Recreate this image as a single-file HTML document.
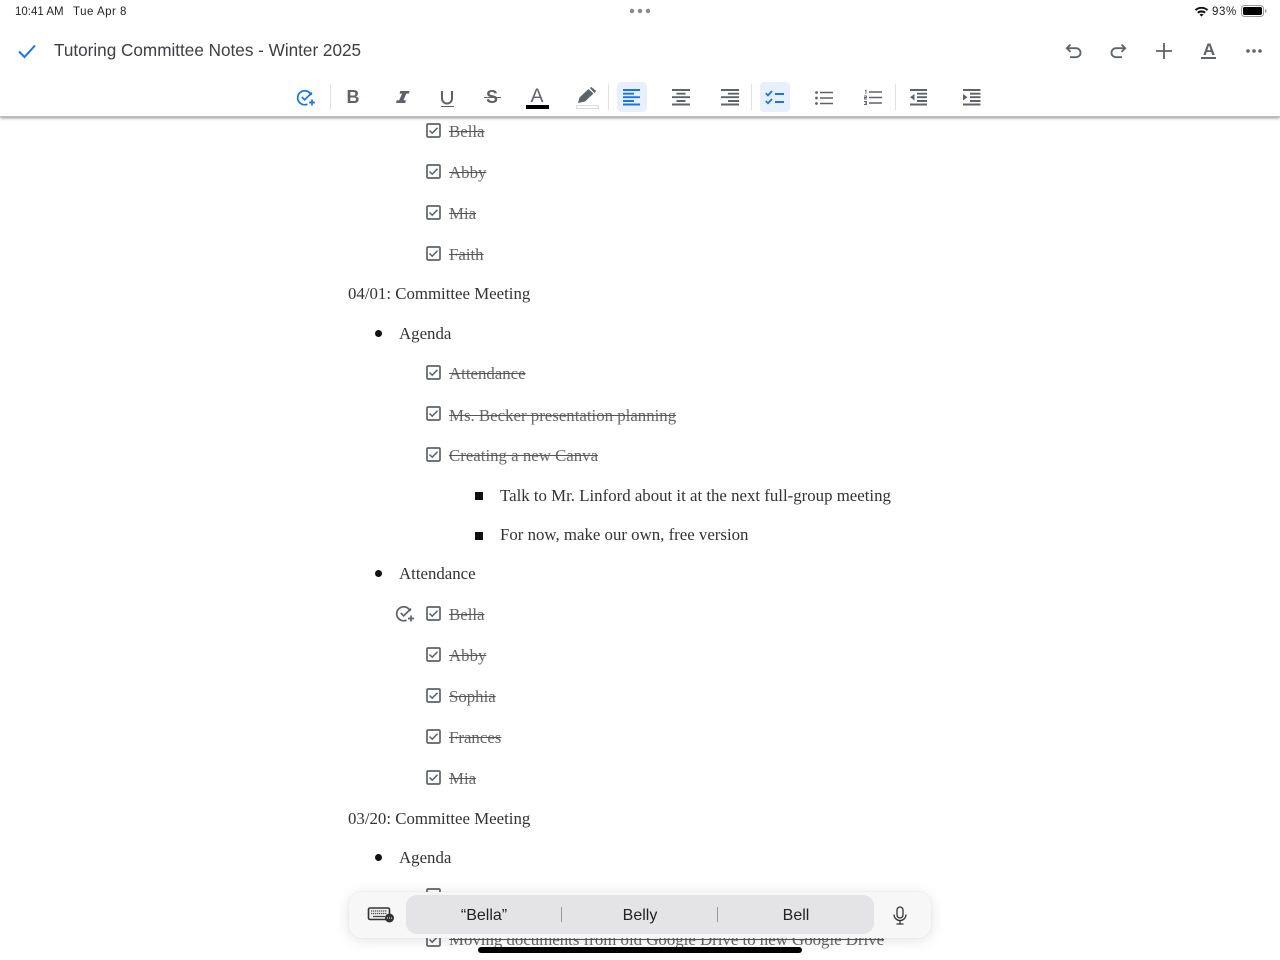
<!DOCTYPE html>
<html><head><meta charset="utf-8"><style>
html,body{margin:0;padding:0;background:#fff}
#p{position:relative;width:1280px;height:960px;overflow:hidden;background:#fff}
.a{position:absolute;white-space:nowrap}
.t{position:absolute;white-space:nowrap;font:16.84px/20px "Liberation Serif",serif;color:#333}
.s{color:#666;text-decoration:line-through;text-decoration-color:#555}
.b{position:absolute;left:375px;width:7px;height:7px;border-radius:50%;background:#111}
.q{position:absolute;left:475px;width:8px;height:8px;background:#111}
.c{position:absolute;left:425.500px;width:15px;height:15px}
.ui{font-family:"Liberation Sans",sans-serif}
svg{position:absolute;overflow:visible}
</style></head><body><div id="p">

<!-- document -->
<div class="t s" style="left:449px;top:122px">Bella</div>
<div class="t s" style="left:449px;top:163px">Abby</div>
<div class="t s" style="left:449px;top:204px">Mia</div>
<div class="t s" style="left:449px;top:245px">Faith</div>
<div class="t" style="left:348px;top:284px">04/01: Committee Meeting</div>
<div class="t" style="left:399px;top:324px">Agenda</div>
<div class="t s" style="left:449px;top:364px">Attendance</div>
<div class="t s" style="left:449px;top:406px">Ms. Becker presentation planning</div>
<div class="t s" style="left:449px;top:446px">Creating a new Canva</div>
<div class="t" style="left:500px;top:486px">Talk to Mr. Linford about it at the next full-group meeting</div>
<div class="t" style="left:500px;top:525px">For now, make our own, free version</div>
<div class="t" style="left:399px;top:564px">Attendance</div>
<div class="t s" style="left:449px;top:605px">Bella</div>
<div class="t s" style="left:449px;top:646px">Abby</div>
<div class="t s" style="left:449px;top:687px">Sophia</div>
<div class="t s" style="left:449px;top:728px">Frances</div>
<div class="t s" style="left:449px;top:769px">Mia</div>
<div class="t" style="left:348px;top:809px">03/20: Committee Meeting</div>
<div class="t" style="left:399px;top:848px">Agenda</div>
<div class="t s" style="left:449px;top:930px">Moving documents from old Google Drive to new Google Drive</div>

<div class="b" style="top:330px"></div>
<div class="b" style="top:570px"></div>
<div class="b" style="top:854px"></div>
<div class="q" style="top:492px"></div>
<div class="q" style="top:532px"></div>

<svg width="0" height="0" style="left:0;top:0">
<defs>
<g id="cb"><rect x="1" y="1" width="13" height="13" rx="1.200" fill="none" stroke="#5f6368" stroke-width="1.700"/><path d="M3.500 7.500l2.700 2.700L11.500 4.800" fill="none" stroke="#5f6368" stroke-width="1.500"/></g>
<g id="cp"><path d="M14.200 6.200A7 7 0 1 0 10.500 15.200" fill="none" stroke="currentColor" stroke-width="1.700"/><path d="M4.800 8l2.800 2.800L15 3.600" fill="none" stroke="currentColor" stroke-width="1.700"/><path d="M15 10.500v6M12 13.500h6" fill="none" stroke="currentColor" stroke-width="1.700"/></g>
</defs>
</svg>
<svg class="c" style="top:123px"><use href="#cb"/></svg>
<svg class="c" style="top:164px"><use href="#cb"/></svg>
<svg class="c" style="top:205px"><use href="#cb"/></svg>
<svg class="c" style="top:246px"><use href="#cb"/></svg>
<svg class="c" style="top:365px"><use href="#cb"/></svg>
<svg class="c" style="top:406px"><use href="#cb"/></svg>
<svg class="c" style="top:447px"><use href="#cb"/></svg>
<svg class="c" style="top:606px"><use href="#cb"/></svg>
<svg class="c" style="top:647px"><use href="#cb"/></svg>
<svg class="c" style="top:688px"><use href="#cb"/></svg>
<svg class="c" style="top:729px"><use href="#cb"/></svg>
<svg class="c" style="top:770px"><use href="#cb"/></svg>
<svg class="c" style="top:888px"><use href="#cb"/></svg>
<svg class="c" style="top:932px"><use href="#cb"/></svg>
<svg width="19" height="18" style="left:396px;top:605px;color:#5f6368"><use href="#cp"/></svg>

<!-- header -->
<div class="a" style="left:0;top:0;width:1280px;height:116px;background:#fff;box-shadow:0 1px 3px rgba(0,0,0,.45);border-bottom:1px solid #bbb"></div>

<div class="a ui" style="left:15px;top:5px;font-size:11.500px;line-height:14px;color:#222">10:41 AM</div>
<div class="a ui" style="left:73px;top:5px;font-size:11.500px;line-height:14px;letter-spacing:.5px;color:#222">Tue Apr 8</div>
<svg width="22" height="6" style="left:629px;top:8px"><circle cx="3" cy="3" r="2.200" fill="#888"/><circle cx="11" cy="3" r="2.200" fill="#888"/><circle cx="19" cy="3" r="2.200" fill="#888"/></svg>

<svg width="16" height="12" style="left:1193.500px;top:5px"><path d="M0.800 4.400A10 10 0 0 1 14.200 4.400L12.900 5.900A8 8 0 0 0 2.100 5.900Z" fill="#111"/><path d="M3.200 7A6.500 6.500 0 0 1 11.800 7L10.400 8.500A4.500 4.500 0 0 0 4.600 8.500Z" fill="#111"/><path d="M5.500 9.500A3 3 0 0 1 9.500 9.500L7.500 11.600Z" fill="#111"/></svg>
<div class="a ui" style="left:1212px;top:5px;font-size:11.500px;line-height:14px;letter-spacing:.6px;color:#222">93%</div>
<svg width="26" height="12" style="left:1241px;top:5px"><rect x=".5" y=".5" width="22" height="11" rx="3" fill="none" stroke="#999"/><rect x="2" y="2" width="19" height="8" rx="1.700" fill="#000"/><path d="M24 4v4c1-.3 1.500-1 1.500-2s-.5-1.700-1.500-2z" fill="#999"/></svg>

<svg width="20" height="16" style="left:17px;top:43px"><path d="M2 8.500l5.500 5.500L18 2.500" fill="none" stroke="#1a73e8" stroke-width="2"/></svg>
<div class="a ui" style="left:54px;top:40px;font-size:17.150px;line-height:21px;color:#3c4043">Tutoring Committee Notes - Winter 2025</div>

<!-- top right icons -->
<svg width="18" height="16" style="left:1065px;top:43px"><path d="M5.500 1.500L1.800 5.200l3.700 3.700M2 5.200h9a4.500 4.500 0 0 1 0 9H5" fill="none" stroke="#5f6368" stroke-width="1.800"/></svg>
<svg width="18" height="16" style="left:1109px;top:43px"><path d="M12.500 1.500l3.700 3.700-3.700 3.700M16 5.200H7a4.500 4.500 0 0 0 0 9h6" fill="none" stroke="#5f6368" stroke-width="1.800"/></svg>
<svg width="16" height="16" style="left:1156px;top:43px"><path d="M8 0v16M0 8h16" stroke="#5f6368" stroke-width="1.800"/></svg>
<div class="a ui" style="left:1201px;top:40px;width:16px;text-align:center;font-size:17px;line-height:19px;font-weight:bold;color:#5f6368">A</div>
<div class="a" style="left:1201px;top:57px;width:15px;height:1.500px;background:#5f6368"></div>
<svg width="16" height="4" style="left:1246px;top:49px"><circle cx="2" cy="2" r="1.800" fill="#5f6368"/><circle cx="8" cy="2" r="1.800" fill="#5f6368"/><circle cx="14" cy="2" r="1.800" fill="#5f6368"/></svg>

<!-- toolbar -->
<svg width="19" height="18" style="left:297px;top:89px;color:#1a73e8"><use href="#cp"/></svg>
<div class="a" style="left:330px;top:84px;width:1px;height:26px;background:#e0e0e0"></div>
<div class="a ui" style="left:345px;top:87px;width:16px;text-align:center;font-size:18px;line-height:21px;font-weight:bold;color:#5f6368">B</div>
<svg width="14" height="14" style="left:396px;top:90px"><path d="M4.200 1h9.300l-.6 2.600H10.300L7.500 10.200h2.400L9.300 13H0l.7-2.800h2.500L6 3.600H3.600z" fill="#5f6368"/></svg>
<svg width="14" height="16" style="left:440px;top:90px"><path d="M2 1v7.500a5 5 0 0 0 10 0V1" fill="none" stroke="#5f6368" stroke-width="2"/></svg>
<div class="a" style="left:441px;top:105.500px;width:12.500px;height:1.500px;background:#5f6368"></div>
<div class="a ui" style="left:484px;top:87px;width:16px;text-align:center;font-size:18px;line-height:21px;font-weight:bold;color:#5f6368">S</div>
<div class="a" style="left:484px;top:96.500px;width:17px;height:1.500px;background:#5f6368"></div>
<div class="a ui" style="left:527px;top:85px;width:20px;text-align:center;font-size:19.500px;line-height:22px;color:#5f6368">A</div>
<div class="a" style="left:526px;top:105px;width:23px;height:4px;background:#000"></div>
<svg width="20" height="17" style="left:577px;top:87px"><path d="M1 16l1.500-5.500L11.500 2l5 4.500-8.500 8z M12.800 1l1.500-1 4.700 3.800-.8 1.700-.8.400z" fill="#5f6368"/></svg>
<div class="a" style="left:576px;top:105px;width:21px;height:2px;border:1px solid #ddd;background:#fff"></div>
<div class="a" style="left:608px;top:84px;width:1px;height:26px;background:#e0e0e0"></div>

<div class="a" style="left:617px;top:82px;width:30px;height:30px;border-radius:4px;background:#e8f0fe"></div>
<svg width="18" height="17" style="left:623px;top:89px"><path d="M0 1h17M0 4.700h11M0 8.200h17M0 12h11M0 15.500h17" stroke="#1a73e8" stroke-width="1.900"/></svg>
<svg width="18" height="17" style="left:672px;top:89px"><path d="M0 1h18M4.500 4.700h9M0 8.200h18M4.500 12h9M0 15.500h18" stroke="#5f6368" stroke-width="1.900"/></svg>
<svg width="18" height="17" style="left:721px;top:89px"><path d="M0 1h18M7 4.700h11M0 8.200h18M7 12h11M0 15.500h18" stroke="#5f6368" stroke-width="1.900"/></svg>
<div class="a" style="left:751px;top:84px;width:1px;height:26px;background:#e0e0e0"></div>
<div class="a" style="left:760px;top:82px;width:30px;height:30px;border-radius:4px;background:#e8f0fe"></div>
<svg width="20" height="16" style="left:765px;top:90px"><path d="M.8 3.200l2.200 2.200L7 1M.8 11l2.200 2.200L7 9" fill="none" stroke="#1a73e8" stroke-width="1.800"/><path d="M10 4h9M10 12h9" stroke="#1a73e8" stroke-width="2"/></svg>
<svg width="18" height="14" style="left:815px;top:91px"><circle cx="1.500" cy="1.500" r="1.400" fill="#5f6368"/><circle cx="1.500" cy="7" r="1.400" fill="#5f6368"/><circle cx="1.500" cy="12.500" r="1.400" fill="#5f6368"/><path d="M5 1.500h13M5 7h13M5 12.500h13" stroke="#5f6368" stroke-width="1.600"/></svg>
<svg width="18" height="15" style="left:864px;top:90px"><path d="M5 2h13M5 7.500h13M5 13h13" stroke="#5f6368" stroke-width="1.600"/><path d="M1 .7l1-.5v3.500M0 6h2.500v1.500h-2v1.500h2.500M0 11.500h2.500v3h-2.500M.8 13h1.700" fill="none" stroke="#5f6368" stroke-width=".9"/></svg>
<div class="a" style="left:895px;top:84px;width:1px;height:26px;background:#e0e0e0"></div>
<svg width="18" height="17" style="left:910px;top:89px"><path d="M0 1h17M7 4.700h10M7 8.200h10M7 12h10M0 15.500h17" stroke="#5f6368" stroke-width="1.900"/><path d="M4.500 5v6.500L0 8.200z" fill="#5f6368"/></svg>
<svg width="18" height="17" style="left:963px;top:89px"><path d="M0 1h17.500M7 4.700h10.500M7 8.200h10.500M7 12h10.500M0 15.500h17.500" stroke="#5f6368" stroke-width="1.900"/><path d="M0 5v6.500l4.500-3.300z" fill="#5f6368"/></svg>

<!-- suggestion bar -->
<div class="a" style="left:349px;top:892px;width:582px;height:46px;border-radius:12px;background:#f7f7f7;box-shadow:0 2px 14px rgba(0,0,0,.12),0 0 1px rgba(0,0,0,.12)"></div>
<div class="a" style="left:406px;top:895px;width:468px;height:39px;border-radius:11px;background:#e4e4e6"></div>
<div class="a ui" style="left:406px;top:907px;width:156px;text-align:center;font-size:16px;line-height:18px;color:#222">“Bella”</div>
<div class="a ui" style="left:562px;top:907px;width:156px;text-align:center;font-size:16px;line-height:18px;color:#222">Belly</div>
<div class="a ui" style="left:718px;top:907px;width:156px;text-align:center;font-size:16px;line-height:18px;color:#222">Bell</div>
<div class="a" style="left:561px;top:907px;width:1px;height:15px;background:#999"></div>
<div class="a" style="left:717px;top:907px;width:1px;height:15px;background:#999"></div>
<svg width="28" height="17" style="left:367px;top:907px"><rect x="1.500" y="1" width="21" height="11.500" rx="1.500" fill="#eee" stroke="#333" stroke-width="1.600"/><path d="M4 4h16M4 6.500h16" stroke="#555" stroke-width="1.200" stroke-dasharray="1.300 .7"/><path d="M6 9.500h12" stroke="#444" stroke-width="1.200"/><circle cx="22.500" cy="11" r="4.500" fill="#333"/><path d="M20 11h5" stroke="#fff" stroke-width="1" stroke-dasharray="1 1"/></svg>
<svg width="14" height="19" style="left:893px;top:906px"><rect x="4" y="1" width="6" height="11" rx="3" fill="none" stroke="#333" stroke-width="1.300"/><path d="M1 8.500a6 6 0 0 0 12 0M7 14.500V17.500M3.500 18h7" fill="none" stroke="#333" stroke-width="1.300"/></svg>

<div class="a" style="left:478px;top:947px;width:324px;height:6px;border-radius:3px;background:#000"></div>
</div></body></html>
